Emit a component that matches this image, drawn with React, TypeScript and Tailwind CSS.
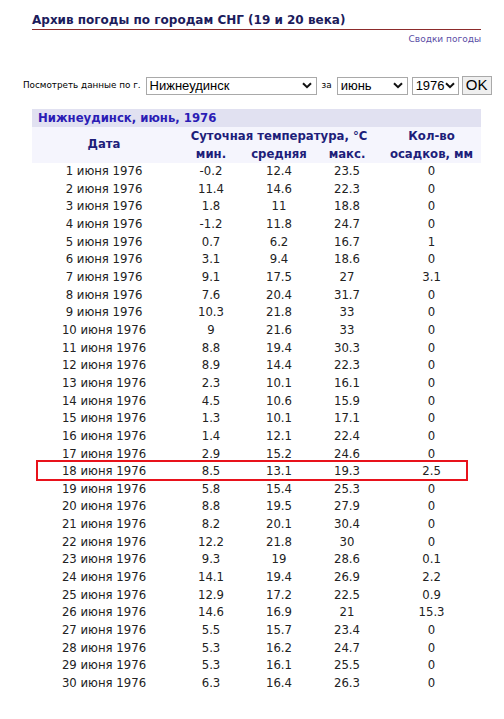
const rows: [string, string, string, string, string][] = [
  ["1 июня 1976", "-0.2", "12.4", "23.5", "0"],
  ["2 июня 1976", "11.4", "14.6", "22.3", "0"],
  ["3 июня 1976", "1.8", "11", "18.8", "0"],
  ["4 июня 1976", "-1.2", "11.8", "24.7", "0"],
  ["5 июня 1976", "0.7", "6.2", "16.7", "1"],
  ["6 июня 1976", "3.1", "9.4", "18.6", "0"],
  ["7 июня 1976", "9.1", "17.5", "27", "3.1"],
  ["8 июня 1976", "7.6", "20.4", "31.7", "0"],
  ["9 июня 1976", "10.3", "21.8", "33", "0"],
  ["10 июня 1976", "9", "21.6", "33", "0"],
  ["11 июня 1976", "8.8", "19.4", "30.3", "0"],
  ["12 июня 1976", "8.9", "14.4", "22.3", "0"],
  ["13 июня 1976", "2.3", "10.1", "16.1", "0"],
  ["14 июня 1976", "4.5", "10.6", "15.9", "0"],
  ["15 июня 1976", "1.3", "10.1", "17.1", "0"],
  ["16 июня 1976", "1.4", "12.1", "22.4", "0"],
  ["17 июня 1976", "2.9", "15.2", "24.6", "0"],
  ["18 июня 1976", "8.5", "13.1", "19.3", "2.5"],
  ["19 июня 1976", "5.8", "15.4", "25.3", "0"],
  ["20 июня 1976", "8.8", "19.5", "27.9", "0"],
  ["21 июня 1976", "8.2", "20.1", "30.4", "0"],
  ["22 июня 1976", "12.2", "21.8", "30", "0"],
  ["23 июня 1976", "9.3", "19", "28.6", "0.1"],
  ["24 июня 1976", "14.1", "19.4", "26.9", "2.2"],
  ["25 июня 1976", "12.9", "17.2", "22.5", "0.9"],
  ["26 июня 1976", "14.6", "16.9", "21", "15.3"],
  ["27 июня 1976", "5.5", "15.7", "23.4", "0"],
  ["28 июня 1976", "5.3", "16.2", "24.7", "0"],
  ["29 июня 1976", "5.3", "16.1", "25.5", "0"],
  ["30 июня 1976", "6.3", "16.4", "26.3", "0"],
];

function Chevron() {
  return (
    <svg width="10" height="7" viewBox="0 0 10 7" className="shrink-0">
      <path d="M1 1.2 L5 5.2 L9 1.2" fill="none" stroke="#111" strokeWidth="2" />
    </svg>
  );
}

function FakeSelect({ value, w }: { value: string; w: string }) {
  return (
    <div className={`${w} h-[18px] border border-[#a9a9a9] bg-white flex items-center justify-between pl-[3px] pr-[4px] text-[13px] leading-none text-black font-['Liberation_Sans',Arial,sans-serif]`}>
      <span>{value}</span>
      <Chevron />
    </div>
  );
}

export default function App() {
  return (
    <div className="w-[504px] h-[719px] bg-white font-['DejaVu_Sans',Verdana,sans-serif] text-[#222] overflow-hidden">
      <div className="w-[449px] ml-[32px] pt-[12px]">
        <h1 className="text-[12px] font-bold text-[#1c1c5c] leading-[16px] border-b border-[#8c2b2b] pb-[1px]">
          Архив погоды по городам СНГ (19 и 20 века)
        </h1>
        <div className="text-right text-[9px] text-[#5a4ea6] leading-[12px] mt-[3px]">Сводки погоды</div>
      </div>

      <div className="flex items-center gap-[4px] ml-[23px] mt-[31px] text-[8.8px] text-black">
        <span className="mr-[1px]">Посмотреть данные по г.</span>
        <FakeSelect value="Нижнеудинск" w="w-[171px]" />
        <span className="mx-[1px]">за</span>
        <FakeSelect value="июнь" w="w-[71px]" />
        <FakeSelect value="1976" w="w-[47px]" />
        <div className="w-[30px] h-[19px] -ml-[1px] border border-[#a9a9a9] bg-[#efefef] flex items-center justify-center text-[15px] text-black font-['Liberation_Sans',Arial,sans-serif]">
          OK
        </div>
      </div>

      <table className="w-[449px] ml-[32px] mt-[14px] border-collapse text-[11.7px] table-fixed">
        <colgroup>
          <col className="w-[144px]" />
          <col className="w-[70px]" />
          <col className="w-[66px]" />
          <col className="w-[70px]" />
          <col className="w-[99px]" />
        </colgroup>
        <thead>
          <tr className="bg-[#e1e1f1]">
            <th colSpan={5} className="h-[18px] p-0 pl-[6px] text-left font-bold text-[#2b1cb5] leading-[18px]">
              Нижнеудинск, июнь, 1976
            </th>
          </tr>
          <tr className="bg-[#f5f5fd] text-[#1e1e7a] font-bold">
            <th rowSpan={2} className="p-0 align-middle">Дата</th>
            <th colSpan={3} className="p-0 h-[18px] leading-[18px]">Суточная температура, °C</th>
            <th rowSpan={2} className="p-0 leading-[18px]">Кол-во<br />осадков, мм</th>
          </tr>
          <tr className="bg-[#f5f5fd] text-[#1e1e7a] font-bold">
            <th className="p-0 h-[18px] leading-[18px]">мин.</th>
            <th className="p-0 leading-[18px]">средняя</th>
            <th className="p-0 leading-[18px]">макс.</th>
          </tr>
        </thead>
        <tbody>
          {rows.map((r, i) => (
            <tr key={r[0]} className="h-[17.66px]">
              {r.map((c, j) => (
                <td key={j} className={`p-0 text-center leading-[17.66px] ${j === 0 && i === 17 ? "relative" : ""}`}>
                  {c}
                  {j === 0 && i === 17 && (
                    <div className="absolute left-[4px] top-[-3px] w-[432px] h-[21px] border-2 border-[#e8121b] pointer-events-none" />
                  )}
                </td>
              ))}
            </tr>
          ))}
        </tbody>
      </table>
    </div>
  );
}
